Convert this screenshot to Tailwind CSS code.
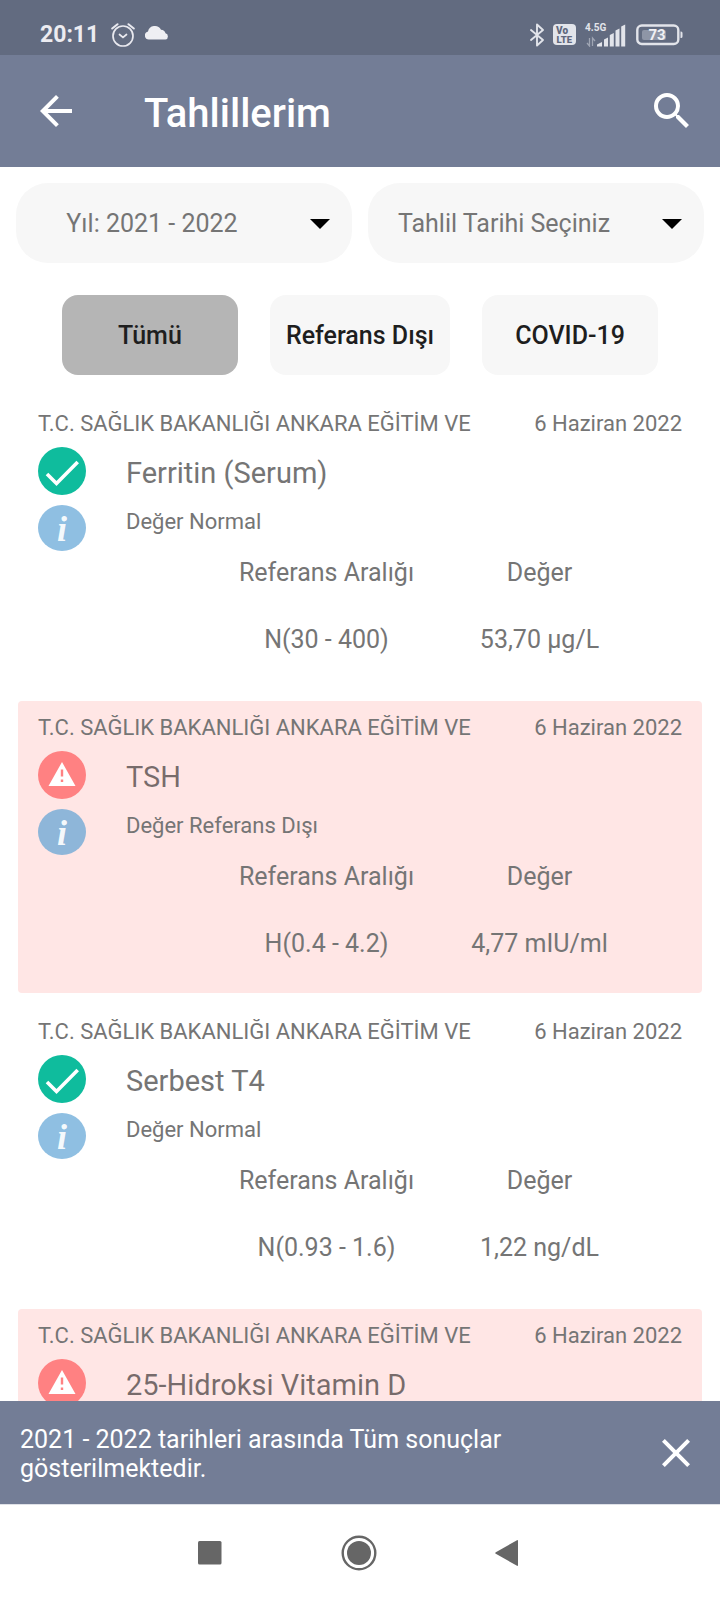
<!DOCTYPE html>
<html lang="tr">
<head>
    <meta charset="UTF-8">
    <meta name="viewport" content="width=device-width, initial-scale=1.0">
    <title>Tahlillerim</title>
    <script src="https://cdn.jsdelivr.net/npm/@tailwindcss/browser@4"></script>
</head>
<body class="flex flex-col h-screen bg-white font-[Roboto,sans-serif] text-[#757575]">

    <!-- Shared icons -->
    <svg class="hidden" aria-hidden="true">
        <symbol id="icon-ok" viewBox="0 0 48 48">
            <circle cx="24" cy="24" r="24" fill="#0fbc9d"/>
            <path d="M9 27l9.500 9.500L39.700 15" fill="none" stroke="#fff" stroke-width="3.600"/>
        </symbol>
        <symbol id="icon-warn" viewBox="0 0 48 48">
            <circle cx="24" cy="24" r="24" fill="#ff8182"/>
            <path d="M24 11L37.500 35H10.500z" fill="#fff"/>
            <path d="M24 18.500v7M24 28.500v2.500" stroke="#ff8182" stroke-width="2.400"/>
        </symbol>
        <symbol id="icon-info" viewBox="0 0 48 46">
            <ellipse cx="24" cy="23" rx="24" ry="23" fill="currentColor"/>
            <text x="24" y="35.500" text-anchor="middle" font-family="Liberation Serif, serif" font-size="36" font-weight="700" font-style="italic" fill="#fff" fill-opacity="0.930">i</text>
        </symbol>
    </svg>

    <!-- Status bar -->
    <div class="flex shrink-0 items-center h-[55px] pt-[14px] pl-10 pr-9 bg-[#626b80] text-[#ececf1]">
        <span class="text-[23px] leading-8 font-bold">20:11</span>
        <svg class="ml-3 size-6" viewBox="0 0 24 24" fill="none" stroke="#e9e9ef" stroke-width="1.700" stroke-linecap="round">
            <circle cx="12" cy="13" r="10"/>
            <path d="M1.200 5.500L6.500 1.200M22.800 5.500L17.500 1.200" stroke-width="2"/>
            <path d="M8.500 11.500l3.500 3 3.500-3"/>
        </svg>
        <svg class="ml-[10px] w-6 h-4 -mt-1" viewBox="0 0 24 16" fill="#efeff3">
            <path d="M4 14.500a4 4 0 0 1-1-7.900A7 7 0 0 1 16 4.700 5 5 0 0 1 20.500 8.300 3.200 3.200 0 0 1 20.500 14.500z"/>
        </svg>

        <div class="flex items-center ml-auto">
            <svg class="w-4 h-6" viewBox="0 0 16 24" fill="none" stroke="#e2e4ea" stroke-width="1.900" stroke-linejoin="round" stroke-linecap="round">
                <path d="M2 7L14 17l-6 5.500v-21L14 7 2 17"/>
            </svg>
            <svg class="ml-2 w-[23px] h-[21px]" viewBox="0 0 23 21" font-family="Roboto, sans-serif" font-weight="900" fill="#5f687d">
                <rect width="23" height="21" rx="4" fill="#e2e4ea"/>
                <text x="3" y="9.500" font-size="10">Vo</text>
                <text x="3.500" y="18.500" font-size="9.500">LTE</text>
            </svg>
            <svg class="ml-2 w-[42px] h-6" viewBox="0 0 42 24" fill="#e2e4ea">
                <text x="1" y="8" font-family="Roboto, sans-serif" font-size="10" font-weight="700">4.5G</text>
                <path d="M13 23.500v-2l5-2.500v4.500zM20 16.500l4-2v9h-4zM25.800 12l4-2v13.500h-4zM31.500 7.500l4-2v18h-4zM37.200 3.500l4-2v22h-4z"/>
                <path d="M5.500 15v8l-2.500-3M8.500 23v-8l2.500 3" fill="none" stroke="#9fa5b3" stroke-width="1.300"/>
            </svg>
            <svg class="ml-[10px] w-[48px] h-[22px]" viewBox="0 0 48 22">
                <rect x="1.300" y="1.500" width="41" height="18.500" rx="4.500" fill="none" stroke="#e2e4ea" stroke-width="2.400"/>
                <rect x="6" y="6" width="24" height="10" rx="2" fill="#8e95a6"/>
                <path d="M44.500 7.500h.5a1.500 1.500 0 0 1 1.500 1.500v3.500a1.500 1.500 0 0 1-1.500 1.500h-.5z" fill="#e2e4ea"/>
                <text x="21" y="16" text-anchor="middle" font-family="Roboto, sans-serif" font-size="15" font-weight="700" fill="#f0f0f4">73</text>
            </svg>
        </div>
    </div>

    <!-- App bar -->
    <header class="flex shrink-0 items-center h-28 pl-8 pr-6 bg-[#737d96] text-white">
        <button type="button" aria-label="Geri" class="size-12">
            <svg class="size-12" viewBox="0 0 24 24" fill="#fff"><path d="M20 11H7.830l5.590-5.590L12 4l-8 8 8 8 1.410-1.410L7.830 13H20v-2z"/></svg>
        </button>
        <h1 class="ml-16 pt-[6px] text-[40px] leading-12 font-medium">Tahlillerim</h1>
        <button type="button" aria-label="Ara" class="ml-auto size-12">
            <svg class="size-12" viewBox="0 0 24 24" fill="#fff"><path d="M15.500 14h-.79l-.28-.27A6.471 6.471 0 0 0 16 9.500 6.500 6.500 0 1 0 9.500 16c1.610 0 3.090-.59 4.230-1.570l.27.28v.79l5 4.990L20.490 19l-4.990-5zm-6 0C7.010 14 5 11.990 5 9.500S7.010 5 9.500 5 14 7.010 14 9.500 11.990 14 9.500 14z"/></svg>
        </button>
    </header>

    <main class="flex-1 min-h-0 overflow-y-auto [scrollbar-width:none]">
        <!-- Filters -->
        <div class="grid grid-cols-2 gap-4 p-4">
            <div class="relative">
                <select aria-label="Yıl" class="w-full h-20 pt-[2px] pr-16 rounded-[32px] bg-[#f7f7f7] appearance-none text-[25px] [text-align-last:center]">
                    <option>Yıl: 2021 - 2022</option>
                </select>
                <svg class="absolute right-[22px] top-9 w-5 h-[10px] pointer-events-none" viewBox="0 0 20 10"><path d="M0 0h20L10 10z"/></svg>
            </div>
            <div class="relative">
                <select aria-label="Tahlil Tarihi" class="w-full h-20 pt-[2px] pr-16 rounded-[32px] bg-[#f7f7f7] appearance-none text-[25px] [text-align-last:center]">
                    <option>Tahlil Tarihi Seçiniz</option>
                </select>
                <svg class="absolute right-[22px] top-9 w-5 h-[10px] pointer-events-none" viewBox="0 0 20 10"><path d="M0 0h20L10 10z"/></svg>
            </div>
        </div>

        <div class="flex justify-center gap-8 py-4 text-[25px] font-medium text-[#1e1e1e]">
            <button type="button" class="h-20 min-w-44 px-4 pt-[2px] rounded-2xl bg-[#b5b5b5]">Tümü</button>
            <button type="button" class="h-20 min-w-44 px-4 pt-[2px] rounded-2xl bg-[#f7f7f7]">Referans Dışı</button>
            <button type="button" class="h-20 min-w-44 px-4 pt-[2px] rounded-2xl bg-[#f7f7f7]">COVID-19</button>
        </div>

        <!-- Results -->
        <section class="flex flex-col gap-3 px-[18px] pt-[6px] pb-3">
            <article class="h-[292px] px-5 pt-[13px] rounded">
                <div class="flex justify-between text-[22px] leading-7">
                    <span>T.C. SAĞLIK BAKANLIĞI ANKARA EĞİTİM VE</span>
                    <time datetime="2022-06-06">6 Haziran 2022</time>
                </div>
                <div class="flex gap-10 pt-[9px]">
                    <div class="flex flex-col gap-[10px]">
                        <svg class="size-12" role="img" aria-label="Normal"><use href="#icon-ok"/></svg>
                        <button type="button" aria-label="Bilgi" class="text-[#8fbfe2]"><svg class="w-12 h-[46px]"><use href="#icon-info"/></svg></button>
                    </div>
                    <div>
                        <h2 class="pt-[2px] text-[29px] leading-12">Ferritin (Serum)</h2>
                        <p class="pt-[11px] text-[22px] leading-7">Değer Normal</p>
                    </div>
                </div>
                <table class="w-[426px] ml-[182px] -mt-3 table-fixed text-center text-[25px]">
                    <tr class="h-[67px]"><th class="font-normal">Referans Aralığı</th><th class="font-normal">Değer</th></tr>
                    <tr class="h-[67px]"><td>N(30 - 400)</td><td>53,70 µg/L</td></tr>
                </table>
            </article>

            <article class="h-[292px] px-5 pt-[13px] rounded bg-[#ffe6e5]">
                <div class="flex justify-between text-[22px] leading-7">
                    <span>T.C. SAĞLIK BAKANLIĞI ANKARA EĞİTİM VE</span>
                    <time datetime="2022-06-06">6 Haziran 2022</time>
                </div>
                <div class="flex gap-10 pt-[9px]">
                    <div class="flex flex-col gap-[10px]">
                        <svg class="size-12" role="img" aria-label="Referans Dışı"><use href="#icon-warn"/></svg>
                        <button type="button" aria-label="Bilgi" class="text-[#8eb6d9]"><svg class="w-12 h-[46px]"><use href="#icon-info"/></svg></button>
                    </div>
                    <div>
                        <h2 class="pt-[2px] text-[29px] leading-12 text-black/54">TSH</h2>
                        <p class="pt-[11px] text-[22px] leading-7">Değer Referans Dışı</p>
                    </div>
                </div>
                <table class="w-[426px] ml-[182px] -mt-3 table-fixed text-center text-[25px]">
                    <tr class="h-[67px]"><th class="font-normal">Referans Aralığı</th><th class="font-normal">Değer</th></tr>
                    <tr class="h-[67px]"><td>H(0.4 - 4.2)</td><td>4,77 mIU/ml</td></tr>
                </table>
            </article>

            <article class="h-[292px] px-5 pt-[13px] rounded">
                <div class="flex justify-between text-[22px] leading-7">
                    <span>T.C. SAĞLIK BAKANLIĞI ANKARA EĞİTİM VE</span>
                    <time datetime="2022-06-06">6 Haziran 2022</time>
                </div>
                <div class="flex gap-10 pt-[9px]">
                    <div class="flex flex-col gap-[10px]">
                        <svg class="size-12" role="img" aria-label="Normal"><use href="#icon-ok"/></svg>
                        <button type="button" aria-label="Bilgi" class="text-[#8fbfe2]"><svg class="w-12 h-[46px]"><use href="#icon-info"/></svg></button>
                    </div>
                    <div>
                        <h2 class="pt-[2px] text-[29px] leading-12">Serbest T4</h2>
                        <p class="pt-[11px] text-[22px] leading-7">Değer Normal</p>
                    </div>
                </div>
                <table class="w-[426px] ml-[182px] -mt-3 table-fixed text-center text-[25px]">
                    <tr class="h-[67px]"><th class="font-normal">Referans Aralığı</th><th class="font-normal">Değer</th></tr>
                    <tr class="h-[67px]"><td>N(0.93 - 1.6)</td><td>1,22 ng/dL</td></tr>
                </table>
            </article>

            <article class="px-5 pt-[13px] pb-6 rounded bg-[#ffe6e5]">
                <div class="flex justify-between text-[22px] leading-7">
                    <span>T.C. SAĞLIK BAKANLIĞI ANKARA EĞİTİM VE</span>
                    <time datetime="2022-06-06">6 Haziran 2022</time>
                </div>
                <div class="flex gap-10 pt-[9px]">
                    <svg class="size-12" role="img" aria-label="Referans Dışı"><use href="#icon-warn"/></svg>
                    <h2 class="pt-[2px] text-[29px] leading-12 text-black/54">25-Hidroksi Vitamin D</h2>
                </div>
            </article>
        </section>
    </main>

    <!-- Message bar -->
    <div class="flex shrink-0 items-center justify-between h-[103px] px-5 bg-[#737d96] text-white">
        <p class="max-w-[520px] pt-[2px] text-[25px] leading-[29px]">2021 - 2022 tarihleri arasında Tüm sonuçlar gösterilmektedir.</p>
        <button type="button" aria-label="Kapat" class="size-12">
            <svg class="size-12" viewBox="0 0 24 24" fill="#fff"><path d="M19 6.410L17.590 5 12 10.590 6.410 5 5 6.410 10.590 12 5 17.590 6.410 19 12 13.410 17.590 19 19 17.590 13.410 12z"/></svg>
        </button>
    </div>

    <!-- System navigation -->
    <nav class="flex shrink-0 items-center justify-center gap-28 h-24 pr-[2px] border-t border-[#dfe1e7] bg-white">
        <button type="button" aria-label="Son uygulamalar" class="size-9">
            <svg class="size-9" viewBox="0 0 36 36" fill="#666"><rect x="5" y="6" width="23.500" height="23.500" rx="1.500"/></svg>
        </button>
        <button type="button" aria-label="Ana ekran" class="size-9">
            <svg class="size-9" viewBox="0 0 36 36" fill="#666"><circle cx="18" cy="18" r="12"/><circle cx="18" cy="18" r="16.300" fill="none" stroke="#666" stroke-width="2.400"/></svg>
        </button>
        <button type="button" aria-label="Geri" class="size-9">
            <svg class="size-9" viewBox="0 0 36 36" fill="#666"><path d="M6.800 17.200L28 5.200q1-.4 1 .8v24q0 1.200-1 .8L6.800 18.800q-1.200-.8 0-1.600z"/></svg>
        </button>
    </nav>
</body>
</html>
